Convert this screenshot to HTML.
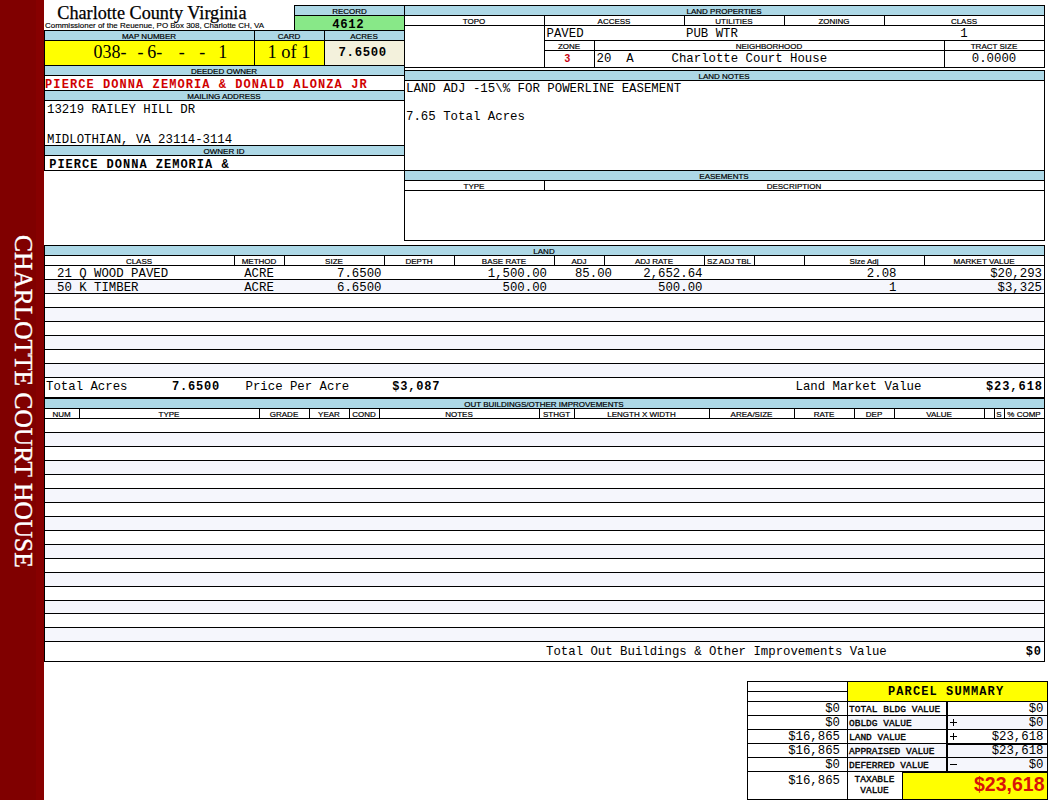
<!DOCTYPE html>
<html><head><meta charset="utf-8"><style>
html,body{margin:0;padding:0;background:#fff;width:1050px;height:800px;overflow:hidden;position:relative}
.r{position:absolute}
.t{position:absolute;white-space:pre;color:#000}
.l{-webkit-text-stroke:0.2px #000}
.side{position:absolute;left:36px;top:235px;width:340px;height:25px;line-height:25px;transform-origin:0 0;transform:rotate(90deg) scaleX(1.017);font-family:"Liberation Serif",serif;font-size:25px;color:#fff;text-align:left;-webkit-text-stroke:0.35px #fff;white-space:pre;letter-spacing:0px}
</style></head><body>
<div class="r" style="left:0px;top:0px;width:44px;height:800px;background:#800000"></div>
<div class="r" style="left:36px;top:0px;width:8px;height:800px;background:#870000"></div>
<div class="r" style="left:295px;top:6px;width:109px;height:9px;background:#add8e6"></div>
<div class="r" style="left:295px;top:16px;width:109px;height:14px;background:#88e888"></div>
<div class="r" style="left:294px;top:5px;width:111px;height:1px;background:#000"></div>
<div class="r" style="left:294px;top:15px;width:111px;height:1px;background:#000"></div>
<div class="r" style="left:294px;top:5px;width:1px;height:26px;background:#000"></div>
<div class="r" style="left:45px;top:31px;width:359px;height:9px;background:#add8e6"></div>
<div class="r" style="left:45px;top:41px;width:209px;height:24px;background:#ffff00"></div>
<div class="r" style="left:255px;top:41px;width:69px;height:24px;background:#ffff00"></div>
<div class="r" style="left:325px;top:41px;width:79px;height:24px;background:#f3f1dc"></div>
<div class="r" style="left:45px;top:66px;width:359px;height:9px;background:#add8e6"></div>
<div class="r" style="left:45px;top:91px;width:359px;height:9px;background:#add8e6"></div>
<div class="r" style="left:45px;top:146px;width:359px;height:9px;background:#add8e6"></div>
<div class="r" style="left:44px;top:30px;width:361px;height:1px;background:#000"></div>
<div class="r" style="left:44px;top:40px;width:361px;height:1px;background:#000"></div>
<div class="r" style="left:44px;top:65px;width:361px;height:1px;background:#000"></div>
<div class="r" style="left:44px;top:75px;width:361px;height:1px;background:#000"></div>
<div class="r" style="left:44px;top:90px;width:361px;height:1px;background:#000"></div>
<div class="r" style="left:44px;top:100px;width:361px;height:1px;background:#000"></div>
<div class="r" style="left:44px;top:145px;width:361px;height:1px;background:#000"></div>
<div class="r" style="left:44px;top:155px;width:361px;height:1px;background:#000"></div>
<div class="r" style="left:44px;top:170px;width:361px;height:1px;background:#000"></div>
<div class="r" style="left:44px;top:30px;width:1px;height:141px;background:#000"></div>
<div class="r" style="left:254px;top:30px;width:1px;height:36px;background:#000"></div>
<div class="r" style="left:324px;top:30px;width:1px;height:36px;background:#000"></div>
<div class="r" style="left:405px;top:6px;width:639px;height:9px;background:#add8e6"></div>
<div class="r" style="left:404px;top:5px;width:641px;height:1px;background:#000"></div>
<div class="r" style="left:404px;top:15px;width:641px;height:1px;background:#000"></div>
<div class="r" style="left:404px;top:25px;width:641px;height:1px;background:#000"></div>
<div class="r" style="left:404px;top:67px;width:641px;height:1px;background:#000"></div>
<div class="r" style="left:404px;top:5px;width:1px;height:236px;background:#000"></div>
<div class="r" style="left:1044px;top:5px;width:1px;height:63px;background:#000"></div>
<div class="r" style="left:544px;top:15px;width:1px;height:11px;background:#000"></div>
<div class="r" style="left:684px;top:15px;width:1px;height:11px;background:#000"></div>
<div class="r" style="left:784px;top:15px;width:1px;height:11px;background:#000"></div>
<div class="r" style="left:884px;top:15px;width:1px;height:11px;background:#000"></div>
<div class="r" style="left:544px;top:25px;width:1px;height:43px;background:#000"></div>
<div class="r" style="left:544px;top:40px;width:501px;height:1px;background:#000"></div>
<div class="r" style="left:544px;top:50px;width:501px;height:1px;background:#000"></div>
<div class="r" style="left:594px;top:40px;width:1px;height:28px;background:#000"></div>
<div class="r" style="left:944px;top:40px;width:1px;height:28px;background:#000"></div>
<div class="r" style="left:405px;top:71px;width:639px;height:9px;background:#add8e6"></div>
<div class="r" style="left:404px;top:70px;width:641px;height:1px;background:#000"></div>
<div class="r" style="left:404px;top:80px;width:641px;height:1px;background:#000"></div>
<div class="r" style="left:404px;top:170px;width:641px;height:1px;background:#000"></div>
<div class="r" style="left:1044px;top:70px;width:1px;height:171px;background:#000"></div>
<div class="r" style="left:405px;top:171px;width:639px;height:9px;background:#add8e6"></div>
<div class="r" style="left:404px;top:180px;width:641px;height:1px;background:#000"></div>
<div class="r" style="left:404px;top:190px;width:641px;height:1px;background:#000"></div>
<div class="r" style="left:404px;top:240px;width:641px;height:1px;background:#000"></div>
<div class="r" style="left:544px;top:180px;width:1px;height:11px;background:#000"></div>
<div class="r" style="left:45px;top:246px;width:999px;height:9px;background:#add8e6"></div>
<div class="r" style="left:44px;top:245px;width:1001px;height:1px;background:#000"></div>
<div class="r" style="left:44px;top:255px;width:1001px;height:1px;background:#000"></div>
<div class="r" style="left:44px;top:265px;width:1001px;height:1px;background:#000"></div>
<div class="r" style="left:44px;top:245px;width:1px;height:154px;background:#000"></div>
<div class="r" style="left:1044px;top:245px;width:1px;height:154px;background:#000"></div>
<div class="r" style="left:234px;top:255px;width:1px;height:11px;background:#000"></div>
<div class="r" style="left:284px;top:255px;width:1px;height:11px;background:#000"></div>
<div class="r" style="left:384px;top:255px;width:1px;height:11px;background:#000"></div>
<div class="r" style="left:454px;top:255px;width:1px;height:11px;background:#000"></div>
<div class="r" style="left:554px;top:255px;width:1px;height:11px;background:#000"></div>
<div class="r" style="left:604px;top:255px;width:1px;height:11px;background:#000"></div>
<div class="r" style="left:704px;top:255px;width:1px;height:11px;background:#000"></div>
<div class="r" style="left:754px;top:255px;width:1px;height:11px;background:#000"></div>
<div class="r" style="left:804px;top:255px;width:1px;height:11px;background:#000"></div>
<div class="r" style="left:924px;top:255px;width:1px;height:11px;background:#000"></div>
<div class="r" style="left:45px;top:280px;width:999px;height:13px;background:#f5f6fc"></div>
<div class="r" style="left:45px;top:308px;width:999px;height:13px;background:#f5f6fc"></div>
<div class="r" style="left:45px;top:336px;width:999px;height:13px;background:#f5f6fc"></div>
<div class="r" style="left:45px;top:364px;width:999px;height:13px;background:#f5f6fc"></div>
<div class="r" style="left:44px;top:279px;width:1001px;height:1px;background:#000"></div>
<div class="r" style="left:44px;top:293px;width:1001px;height:1px;background:#000"></div>
<div class="r" style="left:44px;top:307px;width:1001px;height:1px;background:#000"></div>
<div class="r" style="left:44px;top:321px;width:1001px;height:1px;background:#000"></div>
<div class="r" style="left:44px;top:335px;width:1001px;height:1px;background:#000"></div>
<div class="r" style="left:44px;top:349px;width:1001px;height:1px;background:#000"></div>
<div class="r" style="left:44px;top:363px;width:1001px;height:1px;background:#000"></div>
<div class="r" style="left:44px;top:377px;width:1001px;height:1px;background:#000"></div>
<div class="r" style="left:44px;top:397px;width:1001px;height:2px;background:#000"></div>
<div class="r" style="left:45px;top:399px;width:999px;height:9px;background:#add8e6"></div>
<div class="r" style="left:44px;top:408px;width:1001px;height:1px;background:#000"></div>
<div class="r" style="left:44px;top:418px;width:1001px;height:1px;background:#000"></div>
<div class="r" style="left:44px;top:399px;width:1px;height:263px;background:#000"></div>
<div class="r" style="left:1044px;top:399px;width:1px;height:263px;background:#000"></div>
<div class="r" style="left:79px;top:408px;width:1px;height:11px;background:#000"></div>
<div class="r" style="left:259px;top:408px;width:1px;height:11px;background:#000"></div>
<div class="r" style="left:309px;top:408px;width:1px;height:11px;background:#000"></div>
<div class="r" style="left:349px;top:408px;width:1px;height:11px;background:#000"></div>
<div class="r" style="left:379px;top:408px;width:1px;height:11px;background:#000"></div>
<div class="r" style="left:539px;top:408px;width:1px;height:11px;background:#000"></div>
<div class="r" style="left:574px;top:408px;width:1px;height:11px;background:#000"></div>
<div class="r" style="left:709px;top:408px;width:1px;height:11px;background:#000"></div>
<div class="r" style="left:794px;top:408px;width:1px;height:11px;background:#000"></div>
<div class="r" style="left:854px;top:408px;width:1px;height:11px;background:#000"></div>
<div class="r" style="left:894px;top:408px;width:1px;height:11px;background:#000"></div>
<div class="r" style="left:984px;top:408px;width:1px;height:11px;background:#000"></div>
<div class="r" style="left:994px;top:408px;width:1px;height:11px;background:#000"></div>
<div class="r" style="left:1004px;top:408px;width:1px;height:11px;background:#000"></div>
<div class="r" style="left:45px;top:433px;width:999px;height:13px;background:#f5f6fc"></div>
<div class="r" style="left:45px;top:461px;width:999px;height:13px;background:#f5f6fc"></div>
<div class="r" style="left:45px;top:489px;width:999px;height:13px;background:#f5f6fc"></div>
<div class="r" style="left:45px;top:517px;width:999px;height:13px;background:#f5f6fc"></div>
<div class="r" style="left:45px;top:545px;width:999px;height:13px;background:#f5f6fc"></div>
<div class="r" style="left:45px;top:573px;width:999px;height:13px;background:#f5f6fc"></div>
<div class="r" style="left:45px;top:601px;width:999px;height:12px;background:#f5f6fc"></div>
<div class="r" style="left:45px;top:628px;width:999px;height:13px;background:#f5f6fc"></div>
<div class="r" style="left:44px;top:432px;width:1001px;height:1px;background:#000"></div>
<div class="r" style="left:44px;top:446px;width:1001px;height:1px;background:#000"></div>
<div class="r" style="left:44px;top:460px;width:1001px;height:1px;background:#000"></div>
<div class="r" style="left:44px;top:474px;width:1001px;height:1px;background:#000"></div>
<div class="r" style="left:44px;top:488px;width:1001px;height:1px;background:#000"></div>
<div class="r" style="left:44px;top:502px;width:1001px;height:1px;background:#000"></div>
<div class="r" style="left:44px;top:516px;width:1001px;height:1px;background:#000"></div>
<div class="r" style="left:44px;top:530px;width:1001px;height:1px;background:#000"></div>
<div class="r" style="left:44px;top:544px;width:1001px;height:1px;background:#000"></div>
<div class="r" style="left:44px;top:558px;width:1001px;height:1px;background:#000"></div>
<div class="r" style="left:44px;top:572px;width:1001px;height:1px;background:#000"></div>
<div class="r" style="left:44px;top:586px;width:1001px;height:1px;background:#000"></div>
<div class="r" style="left:44px;top:600px;width:1001px;height:1px;background:#000"></div>
<div class="r" style="left:44px;top:613px;width:1001px;height:1px;background:#000"></div>
<div class="r" style="left:44px;top:627px;width:1001px;height:1px;background:#000"></div>
<div class="r" style="left:44px;top:641px;width:1001px;height:1px;background:#000"></div>
<div class="r" style="left:44px;top:661px;width:1001px;height:1px;background:#000"></div>
<div class="r" style="left:848px;top:716px;width:199px;height:13px;background:#f5f6fc"></div>
<div class="r" style="left:848px;top:744px;width:199px;height:13px;background:#f5f6fc"></div>
<div class="r" style="left:848px;top:758px;width:199px;height:13px;background:#f5f6fc"></div>
<div class="r" style="left:848px;top:682px;width:199px;height:19px;background:#ffff00"></div>
<div class="r" style="left:747px;top:681px;width:301px;height:1px;background:#000"></div>
<div class="r" style="left:747px;top:691px;width:101px;height:1px;background:#000"></div>
<div class="r" style="left:747px;top:701px;width:301px;height:1px;background:#000"></div>
<div class="r" style="left:747px;top:715px;width:301px;height:1px;background:#000"></div>
<div class="r" style="left:747px;top:729px;width:301px;height:1px;background:#000"></div>
<div class="r" style="left:747px;top:757px;width:301px;height:1px;background:#000"></div>
<div class="r" style="left:747px;top:743px;width:301px;height:1px;background:#000"></div>
<div class="r" style="left:947px;top:744px;width:101px;height:1px;background:#000"></div>
<div class="r" style="left:747px;top:771px;width:301px;height:1px;background:#000"></div>
<div class="r" style="left:902px;top:772px;width:146px;height:1px;background:#000"></div>
<div class="r" style="left:747px;top:799px;width:301px;height:1px;background:#000"></div>
<div class="r" style="left:747px;top:681px;width:1px;height:119px;background:#000"></div>
<div class="r" style="left:847px;top:681px;width:1px;height:119px;background:#000"></div>
<div class="r" style="left:1047px;top:681px;width:1px;height:119px;background:#000"></div>
<div class="r" style="left:946px;top:701px;width:2px;height:71px;background:#000"></div>
<div class="r" style="left:903px;top:773px;width:144px;height:26px;background:#ffff00"></div>
<div class="r" style="left:902px;top:771px;width:1px;height:29px;background:#000"></div>
<div class="r" style="left:950px;top:722px;width:7px;height:1px;background:#000"></div>
<div class="r" style="left:953px;top:719px;width:1px;height:7px;background:#000"></div>
<div class="r" style="left:950px;top:736px;width:7px;height:1px;background:#000"></div>
<div class="r" style="left:953px;top:733px;width:1px;height:7px;background:#000"></div>
<div class="r" style="left:950px;top:764px;width:7px;height:1px;background:#000"></div>
<div class="side">CHARLOTTE COURT HOUSE</div>
<div class="t" style="top:3.60px;font-family:'Liberation Serif', serif;font-size:18.2px;line-height:18.2px;left:57.3px;-webkit-text-stroke:0.25px #000;">Charlotte County Virginia</div>
<div class="t" style="top:22.40px;font-family:'Liberation Sans', sans-serif;font-size:7.95px;line-height:7.95px;left:45px;-webkit-text-stroke:0.15px #000;">Commissioner of the Reuenue, PO Box 308, Charlotte CH, VA</div>
<div class="t l" style="top:7.50px;font-family:'Liberation Sans', sans-serif;font-size:8px;line-height:8px;left:295px;width:109px;text-align:center;">RECORD</div>
<div class="t" style="top:18.60px;font-family:'Liberation Mono', monospace;font-size:12.3px;line-height:12.3px;font-weight:700;letter-spacing:0.6px;left:332.2px;">4612</div>
<div class="t l" style="top:32.70px;font-family:'Liberation Sans', sans-serif;font-size:8px;line-height:8px;left:44px;width:210px;text-align:center;">MAP NUMBER</div>
<div class="t l" style="top:32.70px;font-family:'Liberation Sans', sans-serif;font-size:8px;line-height:8px;left:254px;width:70px;text-align:center;">CARD</div>
<div class="t l" style="top:32.70px;font-family:'Liberation Sans', sans-serif;font-size:8px;line-height:8px;left:324px;width:80px;text-align:center;">ACRES</div>
<div class="t" style="top:42.50px;font-family:'Liberation Serif', serif;font-size:18px;line-height:18px;left:93.4px;">038-</div>
<div class="t" style="top:42.50px;font-family:'Liberation Serif', serif;font-size:18px;line-height:18px;left:137.4px;">-</div>
<div class="t" style="top:42.50px;font-family:'Liberation Serif', serif;font-size:18px;line-height:18px;left:147.2px;">6-</div>
<div class="t" style="top:42.50px;font-family:'Liberation Serif', serif;font-size:18px;line-height:18px;left:178.7px;">-</div>
<div class="t" style="top:42.50px;font-family:'Liberation Serif', serif;font-size:18px;line-height:18px;left:199.3px;">-</div>
<div class="t" style="top:42.50px;font-family:'Liberation Serif', serif;font-size:18px;line-height:18px;left:218.2px;">1</div>
<div class="t" style="top:42.80px;font-family:'Liberation Serif', serif;font-size:18.5px;line-height:18.5px;left:254px;width:70px;text-align:center;">1 of 1</div>
<div class="t" style="top:46.60px;font-family:'Liberation Mono', monospace;font-size:12.3px;line-height:12.3px;font-weight:700;letter-spacing:0.65px;left:338.6px;">7.6500</div>
<div class="t l" style="top:67.60px;font-family:'Liberation Sans', sans-serif;font-size:8px;line-height:8px;left:44px;width:360px;text-align:center;">DEEDED OWNER</div>
<div class="t" style="top:78.60px;font-family:'Liberation Mono', monospace;font-size:12px;line-height:12px;font-weight:700;color:#d00000;letter-spacing:1.07px;left:45.1px;">PIERCE DONNA ZEMORIA &amp; DONALD ALONZA JR</div>
<div class="t l" style="top:92.60px;font-family:'Liberation Sans', sans-serif;font-size:8px;line-height:8px;left:44px;width:360px;text-align:center;">MAILING ADDRESS</div>
<div class="t" style="top:104.00px;font-family:'Liberation Mono', monospace;font-size:12.35px;line-height:12.35px;left:47px;">13219 RAILEY HILL DR</div>
<div class="t" style="top:134.00px;font-family:'Liberation Mono', monospace;font-size:12.35px;line-height:12.35px;left:47px;">MIDLOTHIAN, VA 23114-3114</div>
<div class="t l" style="top:147.60px;font-family:'Liberation Sans', sans-serif;font-size:8px;line-height:8px;left:44px;width:360px;text-align:center;">OWNER ID</div>
<div class="t" style="top:158.60px;font-family:'Liberation Mono', monospace;font-size:12px;line-height:12px;font-weight:700;letter-spacing:1.0px;left:49.2px;">PIERCE DONNA ZEMORIA &amp;</div>
<div class="t l" style="top:7.60px;font-family:'Liberation Sans', sans-serif;font-size:8px;line-height:8px;left:404px;width:640px;text-align:center;">LAND PROPERTIES</div>
<div class="t l" style="top:17.60px;font-family:'Liberation Sans', sans-serif;font-size:8px;line-height:8px;left:404px;width:140px;text-align:center;">TOPO</div>
<div class="t l" style="top:17.60px;font-family:'Liberation Sans', sans-serif;font-size:8px;line-height:8px;left:544px;width:140px;text-align:center;">ACCESS</div>
<div class="t l" style="top:17.60px;font-family:'Liberation Sans', sans-serif;font-size:8px;line-height:8px;left:684px;width:100px;text-align:center;">UTILITIES</div>
<div class="t l" style="top:17.60px;font-family:'Liberation Sans', sans-serif;font-size:8px;line-height:8px;left:784px;width:100px;text-align:center;">ZONING</div>
<div class="t l" style="top:17.60px;font-family:'Liberation Sans', sans-serif;font-size:8px;line-height:8px;left:884px;width:160px;text-align:center;">CLASS</div>
<div class="t" style="top:28.00px;font-family:'Liberation Mono', monospace;font-size:12.35px;line-height:12.35px;left:546.5px;">PAVED</div>
<div class="t" style="top:28.00px;font-family:'Liberation Mono', monospace;font-size:12.35px;line-height:12.35px;left:686px;">PUB WTR</div>
<div class="t" style="top:28.00px;font-family:'Liberation Mono', monospace;font-size:12.35px;line-height:12.35px;left:884px;width:160px;text-align:center;">1</div>
<div class="t l" style="top:42.60px;font-family:'Liberation Sans', sans-serif;font-size:8px;line-height:8px;left:544px;width:50px;text-align:center;">ZONE</div>
<div class="t l" style="top:42.60px;font-family:'Liberation Sans', sans-serif;font-size:8px;line-height:8px;left:594px;width:350px;text-align:center;">NEIGHBORHOOD</div>
<div class="t l" style="top:42.60px;font-family:'Liberation Sans', sans-serif;font-size:8px;line-height:8px;left:944px;width:100px;text-align:center;">TRACT SIZE</div>
<div class="t" style="top:54.00px;font-family:'Liberation Sans', sans-serif;font-size:10.3px;line-height:10.3px;font-weight:700;color:#c80010;left:564.6px;">3</div>
<div class="t" style="top:53.00px;font-family:'Liberation Mono', monospace;font-size:12.35px;line-height:12.35px;left:596.5px;">20  A</div>
<div class="t" style="top:53.00px;font-family:'Liberation Mono', monospace;font-size:12.35px;line-height:12.35px;left:671.5px;">Charlotte Court House</div>
<div class="t" style="top:53.00px;font-family:'Liberation Mono', monospace;font-size:12.35px;line-height:12.35px;left:944px;width:100px;text-align:center;">0.0000</div>
<div class="t l" style="top:72.60px;font-family:'Liberation Sans', sans-serif;font-size:8px;line-height:8px;left:404px;width:640px;text-align:center;">LAND NOTES</div>
<div class="t" style="top:83.30px;font-family:'Liberation Mono', monospace;font-size:12.4px;line-height:12.4px;left:406px;">LAND ADJ -15\% FOR POWERLINE EASEMENT</div>
<div class="t" style="top:111.00px;font-family:'Liberation Mono', monospace;font-size:12.4px;line-height:12.4px;left:406px;">7.65 Total Acres</div>
<div class="t l" style="top:172.60px;font-family:'Liberation Sans', sans-serif;font-size:8px;line-height:8px;left:404px;width:640px;text-align:center;">EASEMENTS</div>
<div class="t l" style="top:182.60px;font-family:'Liberation Sans', sans-serif;font-size:8px;line-height:8px;left:404px;width:140px;text-align:center;">TYPE</div>
<div class="t l" style="top:182.60px;font-family:'Liberation Sans', sans-serif;font-size:8px;line-height:8px;left:544px;width:500px;text-align:center;">DESCRIPTION</div>
<div class="t l" style="top:247.60px;font-family:'Liberation Sans', sans-serif;font-size:8px;line-height:8px;left:404px;width:280px;text-align:center;">LAND</div>
<div class="t l" style="top:257.60px;font-family:'Liberation Sans', sans-serif;font-size:8px;line-height:8px;left:44px;width:190px;text-align:center;">CLASS</div>
<div class="t l" style="top:257.60px;font-family:'Liberation Sans', sans-serif;font-size:8px;line-height:8px;left:234px;width:50px;text-align:center;">METHOD</div>
<div class="t l" style="top:257.60px;font-family:'Liberation Sans', sans-serif;font-size:8px;line-height:8px;left:284px;width:100px;text-align:center;">SIZE</div>
<div class="t l" style="top:257.60px;font-family:'Liberation Sans', sans-serif;font-size:8px;line-height:8px;left:384px;width:70px;text-align:center;">DEPTH</div>
<div class="t l" style="top:257.60px;font-family:'Liberation Sans', sans-serif;font-size:8px;line-height:8px;left:454px;width:100px;text-align:center;">BASE RATE</div>
<div class="t l" style="top:257.60px;font-family:'Liberation Sans', sans-serif;font-size:8px;line-height:8px;left:554px;width:50px;text-align:center;">ADJ</div>
<div class="t l" style="top:257.60px;font-family:'Liberation Sans', sans-serif;font-size:8px;line-height:8px;left:604px;width:100px;text-align:center;">ADJ RATE</div>
<div class="t l" style="top:257.60px;font-family:'Liberation Sans', sans-serif;font-size:8px;line-height:8px;left:704px;width:50px;text-align:center;">SZ ADJ TBL</div>
<div class="t l" style="top:257.60px;font-family:'Liberation Sans', sans-serif;font-size:8px;line-height:8px;left:804px;width:120px;text-align:center;">Size Adj</div>
<div class="t l" style="top:257.60px;font-family:'Liberation Sans', sans-serif;font-size:8px;line-height:8px;left:924px;width:120px;text-align:center;">MARKET VALUE</div>
<div class="t" style="top:267.90px;font-family:'Liberation Mono', monospace;font-size:12.35px;line-height:12.35px;left:57px;">21 Q WOOD PAVED</div>
<div class="t" style="top:267.90px;font-family:'Liberation Mono', monospace;font-size:12.35px;line-height:12.35px;left:234px;width:50px;text-align:center;">ACRE</div>
<div class="t" style="top:267.90px;font-family:'Liberation Mono', monospace;font-size:12.35px;line-height:12.35px;right:668.5px;">7.6500</div>
<div class="t" style="top:267.90px;font-family:'Liberation Mono', monospace;font-size:12.35px;line-height:12.35px;right:503px;">1,500.00</div>
<div class="t" style="top:267.90px;font-family:'Liberation Mono', monospace;font-size:12.35px;line-height:12.35px;right:438px;">85.00</div>
<div class="t" style="top:267.90px;font-family:'Liberation Mono', monospace;font-size:12.35px;line-height:12.35px;right:347.5px;">2,652.64</div>
<div class="t" style="top:267.90px;font-family:'Liberation Mono', monospace;font-size:12.35px;line-height:12.35px;right:153.5px;">2.08</div>
<div class="t" style="top:267.90px;font-family:'Liberation Mono', monospace;font-size:12.35px;line-height:12.35px;right:8px;">$20,293</div>
<div class="t" style="top:281.90px;font-family:'Liberation Mono', monospace;font-size:12.35px;line-height:12.35px;left:57px;">50 K TIMBER</div>
<div class="t" style="top:281.90px;font-family:'Liberation Mono', monospace;font-size:12.35px;line-height:12.35px;left:234px;width:50px;text-align:center;">ACRE</div>
<div class="t" style="top:281.90px;font-family:'Liberation Mono', monospace;font-size:12.35px;line-height:12.35px;right:668.5px;">6.6500</div>
<div class="t" style="top:281.90px;font-family:'Liberation Mono', monospace;font-size:12.35px;line-height:12.35px;right:503px;">500.00</div>
<div class="t" style="top:281.90px;font-family:'Liberation Mono', monospace;font-size:12.35px;line-height:12.35px;right:347.5px;">500.00</div>
<div class="t" style="top:281.90px;font-family:'Liberation Mono', monospace;font-size:12.35px;line-height:12.35px;right:153.5px;">1</div>
<div class="t" style="top:281.90px;font-family:'Liberation Mono', monospace;font-size:12.35px;line-height:12.35px;right:8px;">$3,325</div>
<div class="t" style="top:380.80px;font-family:'Liberation Mono', monospace;font-size:12.35px;line-height:12.35px;left:46px;">Total Acres</div>
<div class="t" style="top:380.80px;font-family:'Liberation Mono', monospace;font-size:12px;line-height:12px;font-weight:700;letter-spacing:0.8px;left:172px;">7.6500</div>
<div class="t" style="top:380.80px;font-family:'Liberation Mono', monospace;font-size:12.35px;line-height:12.35px;left:245.5px;">Price Per Acre</div>
<div class="t" style="top:380.80px;font-family:'Liberation Mono', monospace;font-size:12px;line-height:12px;font-weight:700;letter-spacing:0.8px;left:392.3px;">$3,087</div>
<div class="t" style="top:380.80px;font-family:'Liberation Mono', monospace;font-size:12.35px;line-height:12.35px;left:795.5px;">Land Market Value</div>
<div class="t" style="top:380.80px;font-family:'Liberation Mono', monospace;font-size:12px;line-height:12px;font-weight:700;letter-spacing:0.95px;right:8px;margin-right:-0.95px;">$23,618</div>
<div class="t l" style="top:400.60px;font-family:'Liberation Sans', sans-serif;font-size:8px;line-height:8px;left:404px;width:280px;text-align:center;">OUT BUILDINGS/OTHER IMPROVEMENTS</div>
<div class="t l" style="top:410.60px;font-family:'Liberation Sans', sans-serif;font-size:8px;line-height:8px;left:44px;width:35px;text-align:center;">NUM</div>
<div class="t l" style="top:410.60px;font-family:'Liberation Sans', sans-serif;font-size:8px;line-height:8px;left:79px;width:180px;text-align:center;">TYPE</div>
<div class="t l" style="top:410.60px;font-family:'Liberation Sans', sans-serif;font-size:8px;line-height:8px;left:259px;width:50px;text-align:center;">GRADE</div>
<div class="t l" style="top:410.60px;font-family:'Liberation Sans', sans-serif;font-size:8px;line-height:8px;left:309px;width:40px;text-align:center;">YEAR</div>
<div class="t l" style="top:410.60px;font-family:'Liberation Sans', sans-serif;font-size:8px;line-height:8px;left:349px;width:30px;text-align:center;">COND</div>
<div class="t l" style="top:410.60px;font-family:'Liberation Sans', sans-serif;font-size:8px;line-height:8px;left:379px;width:160px;text-align:center;">NOTES</div>
<div class="t l" style="top:410.60px;font-family:'Liberation Sans', sans-serif;font-size:8px;line-height:8px;left:539px;width:35px;text-align:center;">STHGT</div>
<div class="t l" style="top:410.60px;font-family:'Liberation Sans', sans-serif;font-size:8px;line-height:8px;left:574px;width:135px;text-align:center;">LENGTH X WIDTH</div>
<div class="t l" style="top:410.60px;font-family:'Liberation Sans', sans-serif;font-size:8px;line-height:8px;left:709px;width:85px;text-align:center;">AREA/SIZE</div>
<div class="t l" style="top:410.60px;font-family:'Liberation Sans', sans-serif;font-size:8px;line-height:8px;left:794px;width:60px;text-align:center;">RATE</div>
<div class="t l" style="top:410.60px;font-family:'Liberation Sans', sans-serif;font-size:8px;line-height:8px;left:854px;width:40px;text-align:center;">DEP</div>
<div class="t l" style="top:410.60px;font-family:'Liberation Sans', sans-serif;font-size:8px;line-height:8px;left:894px;width:90px;text-align:center;">VALUE</div>
<div class="t l" style="top:410.60px;font-family:'Liberation Sans', sans-serif;font-size:8px;line-height:8px;left:994px;width:10px;text-align:center;">S</div>
<div class="t l" style="top:410.60px;font-family:'Liberation Sans', sans-serif;font-size:8px;line-height:8px;left:1004px;width:40px;text-align:center;">% COMP</div>
<div class="t" style="top:646.00px;font-family:'Liberation Mono', monospace;font-size:12.35px;line-height:12.35px;left:546px;">Total Out Buildings &amp; Other Improvements Value</div>
<div class="t" style="top:646.00px;font-family:'Liberation Mono', monospace;font-size:12px;line-height:12px;font-weight:700;letter-spacing:0.8px;right:9px;margin-right:-0.8px;">$0</div>
<div class="t" style="top:686.20px;font-family:'Liberation Mono', monospace;font-size:12px;line-height:12px;font-weight:700;letter-spacing:1.1px;left:888px;">PARCEL SUMMARY</div>
<div class="t" style="top:704.60px;font-family:'Liberation Mono', monospace;font-size:9.5px;line-height:9.5px;left:849px;-webkit-text-stroke:0.35px #000;">TOTAL BLDG VALUE</div>
<div class="t" style="top:702.60px;font-family:'Liberation Mono', monospace;font-size:12.35px;line-height:12.35px;right:210px;">$0</div>
<div class="t" style="top:702.60px;font-family:'Liberation Mono', monospace;font-size:12.35px;line-height:12.35px;right:6.5px;">$0</div>
<div class="t" style="top:718.60px;font-family:'Liberation Mono', monospace;font-size:9.5px;line-height:9.5px;left:849px;-webkit-text-stroke:0.35px #000;">OBLDG VALUE</div>
<div class="t" style="top:716.60px;font-family:'Liberation Mono', monospace;font-size:12.35px;line-height:12.35px;right:210px;">$0</div>
<div class="t" style="top:716.60px;font-family:'Liberation Mono', monospace;font-size:12.35px;line-height:12.35px;right:6.5px;">$0</div>
<div class="t" style="top:732.60px;font-family:'Liberation Mono', monospace;font-size:9.5px;line-height:9.5px;left:849px;-webkit-text-stroke:0.35px #000;">LAND VALUE</div>
<div class="t" style="top:730.60px;font-family:'Liberation Mono', monospace;font-size:12.35px;line-height:12.35px;right:210px;">$16,865</div>
<div class="t" style="top:730.60px;font-family:'Liberation Mono', monospace;font-size:12.35px;line-height:12.35px;right:6.5px;">$23,618</div>
<div class="t" style="top:746.60px;font-family:'Liberation Mono', monospace;font-size:9.5px;line-height:9.5px;left:849px;-webkit-text-stroke:0.35px #000;">APPRAISED VALUE</div>
<div class="t" style="top:744.60px;font-family:'Liberation Mono', monospace;font-size:12.35px;line-height:12.35px;right:210px;">$16,865</div>
<div class="t" style="top:744.60px;font-family:'Liberation Mono', monospace;font-size:12.35px;line-height:12.35px;right:6.5px;">$23,618</div>
<div class="t" style="top:760.60px;font-family:'Liberation Mono', monospace;font-size:9.5px;line-height:9.5px;left:849px;-webkit-text-stroke:0.35px #000;">DEFERRED VALUE</div>
<div class="t" style="top:758.60px;font-family:'Liberation Mono', monospace;font-size:12.35px;line-height:12.35px;right:210px;">$0</div>
<div class="t" style="top:758.60px;font-family:'Liberation Mono', monospace;font-size:12.35px;line-height:12.35px;right:6.5px;">$0</div>
<div class="t" style="top:775.20px;font-family:'Liberation Mono', monospace;font-size:12.35px;line-height:12.35px;right:210px;">$16,865</div>
<div class="t" style="top:774.50px;font-family:'Liberation Mono', monospace;font-size:9.5px;line-height:9.5px;left:847px;width:55px;text-align:center;-webkit-text-stroke:0.35px #000;">TAXABLE</div>
<div class="t" style="top:785.50px;font-family:'Liberation Mono', monospace;font-size:9.5px;line-height:9.5px;left:847px;width:55px;text-align:center;-webkit-text-stroke:0.35px #000;">VALUE</div>
<div class="t" style="top:774.50px;font-family:'Liberation Sans', sans-serif;font-size:19.5px;line-height:19.5px;font-weight:700;color:#d81408;right:5.5px;">$23,618</div>
</body></html>
